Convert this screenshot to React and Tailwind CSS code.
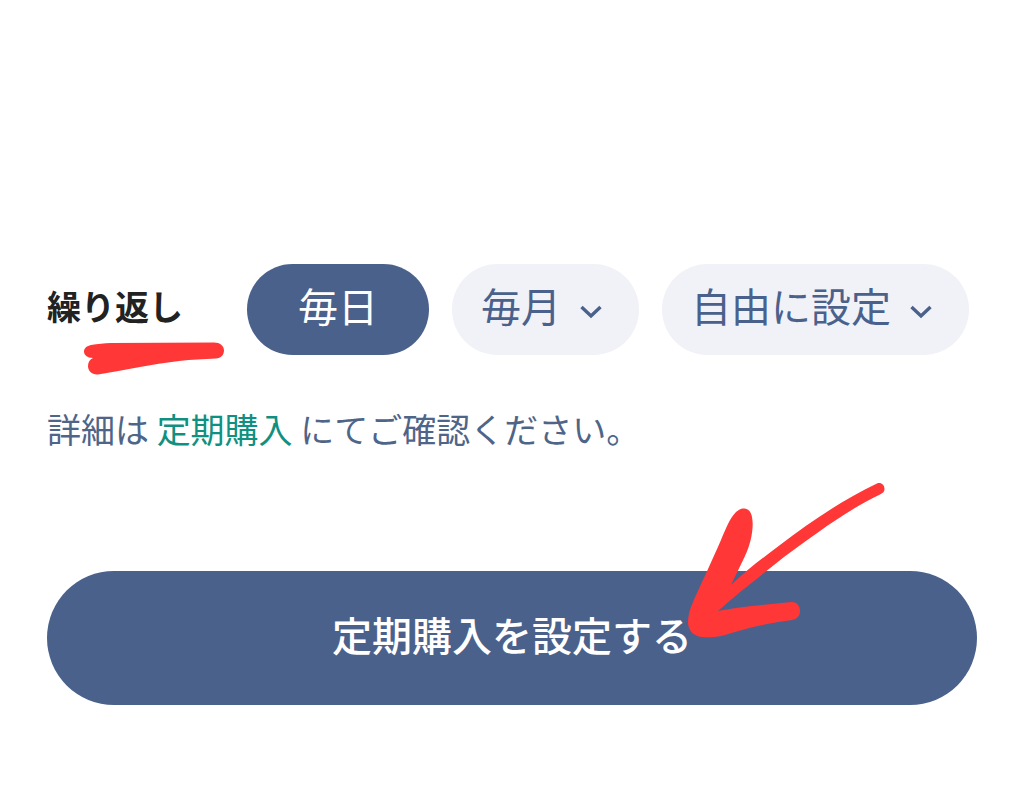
function Chevron() {
  return (
    <svg className="mt-1 h-4 w-6 shrink-0" viewBox="0 0 24 16" fill="none" aria-hidden="true">
      <path d="M2.5 3 L12 12 L21.5 3" stroke="currentColor" strokeWidth="3.4" />
    </svg>
  );
}

function Pill({ children, selected = false, menu = false }) {
  return (
    <button
      type="button"
      aria-pressed={menu ? undefined : selected}
      aria-haspopup={menu ? "menu" : undefined}
      className={
        selected
          ? "flex h-[91px] items-center rounded-full bg-[#4a618c] px-[51px] text-white"
          : "flex h-[91px] items-center gap-[18px] rounded-full bg-[#f1f2f7] pr-9 pl-[29px] text-[#4a618c]"
      }
    >
      <span className="pb-2.5">{children}</span>
      {menu && <Chevron />}
    </button>
  );
}

function Underline() {
  return (
    <svg
      className="pointer-events-none absolute top-full left-9 h-9 w-[142px]"
      viewBox="84 339 142 36"
      fill="#ff3737"
      aria-hidden="true"
    >
      <path d="M92 345 C99 343.5 105 343.5 112 343 L215 342.5 C221 342.5 225 346 225 350.500 C225 355 222 358 217 358.500 C204 359.500 193 359.500 180 361 C153 364 126 370 99 374.500 C93 375 89 371 89 366 C89 362 91 359.500 94 358 C88 358 85 355 85 351.500 C85 348 88 346 92 345 Z" />
    </svg>
  );
}

function Arrow() {
  return (
    <svg
      className="pointer-events-none absolute right-[90px] bottom-[66px] h-[158px] w-[200px]"
      viewBox="687 481 200 158"
      fill="#ff3737"
      aria-hidden="true"
    >
      <path d="M744.500 508.500 C750 509 752.500 514 752.700 524 C752.500 535 750 545 745 556 L731 585 C748 569 764 557 780 545 C811 521 843 500 877 483.500 C881 482 884.500 485 884.500 489 C884.500 491.500 883 493 880 494.500 C847 510 813 536 784 557 C759 577 738 593 718 611 C739 607 761 605 792 602 C797 602 800 606 800 611 C800 616 797 619 792 620 C772 623 753 626 735 632 C720 637 710 638 702 637 C693 636 688 630 688 622 C688 615 690 609 693 602 C701 584 711 563 721 540 C726 528 730 518 736 512 C739 509.500 741 508.500 744.500 508.500 Z" />
    </svg>
  );
}

export default function App() {
  return (
    <main className="min-h-screen bg-white px-[47px] pt-[264px] pb-20 font-['Noto_Sans_CJK_JP',sans-serif]">
      <div className="flex items-center" role="group" aria-labelledby="repeat-label">
        <div className="relative w-[200px] shrink-0">
          <h2 id="repeat-label" className="pb-2 text-[34px] leading-[50px] font-bold text-[#222222]">
            繰り返し
          </h2>
          <Underline />
        </div>
        <div className="flex gap-[23px] text-[40px] leading-[56px] whitespace-nowrap">
          <Pill selected>毎日</Pill>
          <Pill menu>毎月</Pill>
          <Pill menu>自由に設定</Pill>
        </div>
      </div>

      <p className="mt-[49px] text-[34px] leading-[50px] text-[#4f6588]">
        詳細は{" "}
        <a href="#subscription" className="text-[#109080]">
          定期購入
        </a>{" "}
        にてご確認ください。
      </p>

      <div className="relative mt-[117px]">
        <button
          type="button"
          className="flex h-[134px] w-full items-center justify-center rounded-full bg-[#4a618c] pb-2 text-[40px] leading-[60px] font-medium text-white"
        >
          定期購入を設定する
        </button>
        <Arrow />
      </div>
    </main>
  );
}
